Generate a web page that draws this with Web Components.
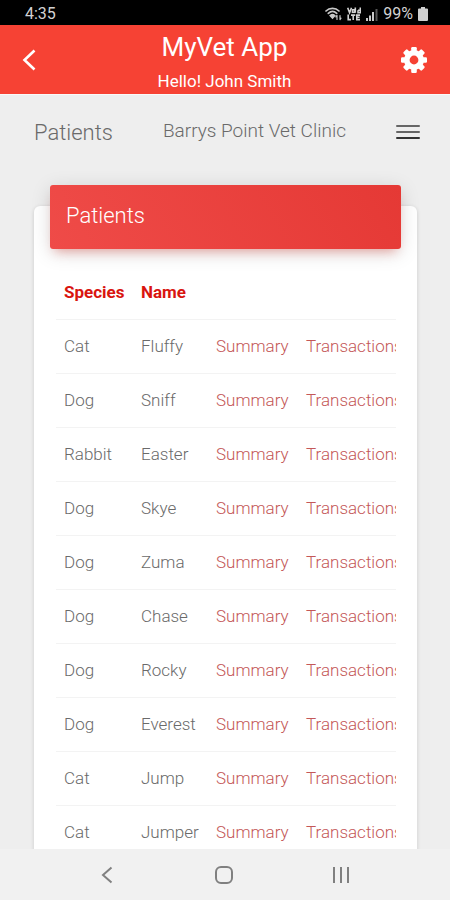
<!DOCTYPE html>
<html lang="en">
<head>
<meta charset="utf-8">
<meta name="viewport" content="width=device-width, initial-scale=1">
<title>MyVet App</title>
<style>
html, body { margin: 0; height: 100%; }
body { font-family: Roboto, "Open Sans", sans-serif; color: #6a6a6a; background: #eee; overflow: hidden; }
</style>
</head>
<body>
<vet-app>
  <status-bar slot="status" time="4:35" battery="99%"></status-bar>
  <app-bar slot="bar"><span slot="title">MyVet App</span><span slot="greeting">Hello! John Smith</span></app-bar>
  <page-head><span slot="section">Patients</span><span slot="clinic">Barrys Point Vet Clinic</span></page-head>
  <title-card><span slot="heading">Patients</span><patient-table></patient-table></title-card>
  <system-nav slot="nav"></system-nav>
</vet-app>
<script>
const define = (name, html, setup) => customElements.define(name, class extends HTMLElement {
  constructor() {
    super();
    this.attachShadow({ mode: 'open' }).innerHTML = html;
  }
  connectedCallback() { if (setup) setup(this, this.shadowRoot); }
});

define('vet-app', `
<style>
:host { display: flex; flex-direction: column; height: 100vh; background: #eee; }
main { flex: 1; min-height: 0; overflow: hidden; }
</style>
<slot name="status"></slot><slot name="bar"></slot>
<main><slot></slot></main>
<slot name="nav"></slot>`);

define('status-bar', `
<style>
:host { display: flex; flex: none; align-items: center; justify-content: space-between; height: 25px; box-sizing: border-box;
  padding: 3px 22px 0 25px; background: #000; color: #d2d2d2; font-size: 16px; line-height: 20px; }
div { display: flex; align-items: center; gap: 5px; }
svg { display: block; }
</style>
<span id="time"></span>
<div>
  <svg width="17" height="14" viewBox="0 0 17 14" fill="none" stroke="#c8c8c8" stroke-width="1.7" stroke-linecap="round">
    <path d="M1 4C4.500 .4 10.500 .4 14 4M3.300 6.300C5.800 4 9.200 4 11.700 6.300"/><path d="M5.300 8.600Q7.500 6.800 9.700 8.600L7.500 11Z" fill="#c8c8c8"/>
    <path d="M12 12.500V8.500M10.800 9.800L12 8.400M15 8.500V12.500M16 11.200L15 12.600" stroke-width="1.200"/></svg>
  <svg width="14" height="14" viewBox="0 0 14 14" fill="none" stroke="#d0d0d0" stroke-width="1.600">
    <path d="M.7 .8L2.600 5.700L4.500 .8M8.300 .6V5.700M11 3.200H13.300M13.300 .6V5.700H11V3.200M1.200 7.500V12.600H4M4 8.100H8.300M6.200 8.100V13M13 8.100H9.800V12.600H13M9.800 10.300H12.600"/><rect x="5.500" y="2.800" width="2" height="2.500"/></svg>
  <svg width="12" height="13" viewBox="0 0 12 13" fill="#c8c8c8"><path d="M0 10h2v3H0zM3 7.500h2V13H3zM6 4h2v9H6z"/><path d="M9.500 1h2v12h-2z" fill="#555"/></svg>
  <span id="level"></span>
  <svg width="10" height="14" viewBox="0 0 10 14" fill="#d0d0d0"><path d="M3 0h4v1.500h2q1 0 1 1V13q0 1-1 1H1q-1 0-1-1V2.500q0-1 1-1h2z"/></svg>
</div>`, (el, root) => {
  root.getElementById('time').textContent = el.getAttribute('time');
  root.getElementById('level').textContent = el.getAttribute('battery');
});

define('app-bar', `
<style>
:host { display: grid; flex: none; grid-template-columns: 32px 1fr 32px; grid-template-rows: 100%; align-items: center; height: 70px;
  box-sizing: border-box; padding: 0 20px 0 13px; background: #f64234; border-bottom: 1px solid #f9f9f9; color: #fff; }
button { display: grid; place-items: center; width: 32px; height: 40px; padding: 0; border: 0; background: none; color: inherit; }
header { align-self: start; text-align: center; padding: 4px 0 0 6px; }
h1, p { margin: 0; font-weight: 400; }
h1 { font-size: 26px; line-height: 36px; }
p { font-size: 17px; line-height: 29px; padding-top: 2px; }
</style>
<button aria-label="Back"><svg width="14" height="22" viewBox="0 0 14 22" fill="none" stroke="currentColor" stroke-width="2.600"><path d="M12.500 1.500L2.500 11L12.500 20.500"/></svg></button>
<header><h1><slot name="title"></slot></h1><p><slot name="greeting"></slot></p></header>
<button aria-label="Settings"><svg width="26" height="26" viewBox="0 0 26 26" fill="currentColor">
  <circle cx="13" cy="13" r="7.200" fill="none" stroke="currentColor" stroke-width="5.600"/>
  <g id="t"><rect x="10.200" y="0" width="5.600" height="6" rx="1.200"/><rect x="10.200" y="20" width="5.600" height="6" rx="1.200"/><rect x="0" y="10.200" width="6" height="5.600" rx="1.200"/><rect x="20" y="10.200" width="6" height="5.600" rx="1.200"/></g>
  <use href="#t" transform="rotate(45 13 13)"/></svg></button>`);

define('page-head', `
<style>
:host { display: flex; align-items: center; justify-content: space-between; padding: 20px 30px 0 34px; height: 36px; font-weight: 300; }
h2, p { margin: 0; font-weight: 300; line-height: 32px; }
h2 { font-size: 22px; }
p { font-size: 19px; padding-bottom: 4px; }
button { display: flex; flex-direction: column; gap: 4px; padding: 0 0 2px; border: 0; background: none; width: 24px; }
i { display: block; width: 24px; height: 2px; border-radius: 1px; background: #666; }
i:last-child { background: #333; }
</style>
<h2><slot name="section"></slot></h2><p><slot name="clinic"></slot></p>
<button aria-label="Menu"><i></i><i></i><i></i></button>`);

define('title-card', `
<style>
:host { display: block; margin: 55px 33px 0 34px; background: #fff; border-radius: 6px; box-shadow: 0 1px 4px rgba(0,0,0,.14); }
h3 { position: relative; top: -21px; margin: 0 16px -21px; padding: 15px 16px 17px; font-size: 22px; line-height: 32px; font-weight: 300; color: #fff; border-radius: 3px;
  background: linear-gradient(60deg, #ef4b48, #e53935); box-shadow: 0 4px 20px rgba(0,0,0,.14), 0 7px 10px -5px rgba(244,67,54,.4); }
section { padding: 16px 21px 0 22px; }
</style>
<h3><slot name="heading"></slot></h3><section><slot></slot></section>`);

define('patient-table', `
<style>
:host { display: block; overflow: hidden; }
table { border-collapse: collapse; table-layout: fixed; width: 350px; min-width: 100%; font-size: 17px; line-height: 24px; font-weight: 300; }
th, td { height: 54px; box-sizing: border-box; padding: 0 8px; text-align: left; white-space: nowrap; }
tr { border-bottom: 1px solid #f3f3f3; }
th { color: #d9150f; font-weight: 700; }
a { color: #c45858; text-decoration: none; }
.species { width: 77px; } .name { width: 75px; } .summary { width: 90px; }
</style>
<table>
<colgroup><col class="species"><col class="name"><col class="summary"><col></colgroup>
<thead><tr><th scope="col">Species</th><th scope="col">Name</th><td></td><td></td></tr></thead>
<tbody></tbody>
</table>`, (el, root) => {
  const patients = [['Cat', 'Fluffy'], ['Dog', 'Sniff'], ['Rabbit', 'Easter'], ['Dog', 'Skye'], ['Dog', 'Zuma'],
    ['Dog', 'Chase'], ['Dog', 'Rocky'], ['Dog', 'Everest'], ['Cat', 'Jump'], ['Cat', 'Jumper']];
  root.querySelector('tbody').innerHTML = patients.map(([s, n]) =>
    `<tr><td>${s}</td><td>${n}</td><td><a href="#summary">Summary</a></td><td><a href="#transactions">Transactions</a></td></tr>`).join('');
});

define('system-nav', `
<style>
:host { display: grid; flex: none; grid-template-columns: repeat(3, 117px); justify-content: center; align-items: center; height: 51px; padding-right: 2px; background: #f1f1f1; }
button { justify-self: center; display: grid; place-items: center; width: 44px; height: 44px; padding: 0; border: 0; background: none; }
svg { fill: none; stroke: #808080; stroke-width: 2; }
</style>
<button aria-label="Back"><svg width="12" height="18" viewBox="0 0 12 18"><path d="M10.500 1.500L2 9L10.500 16.500"/></svg></button>
<button aria-label="Home"><svg width="18" height="18" viewBox="0 0 18 18"><rect x="1" y="1" width="16" height="16" rx="5"/></svg></button>
<button aria-label="Recent apps"><svg width="18" height="18" viewBox="0 0 18 18"><path d="M2 1V17M9 1V17M16 1V17"/></svg></button>`);
</script>
</body>
</html>
